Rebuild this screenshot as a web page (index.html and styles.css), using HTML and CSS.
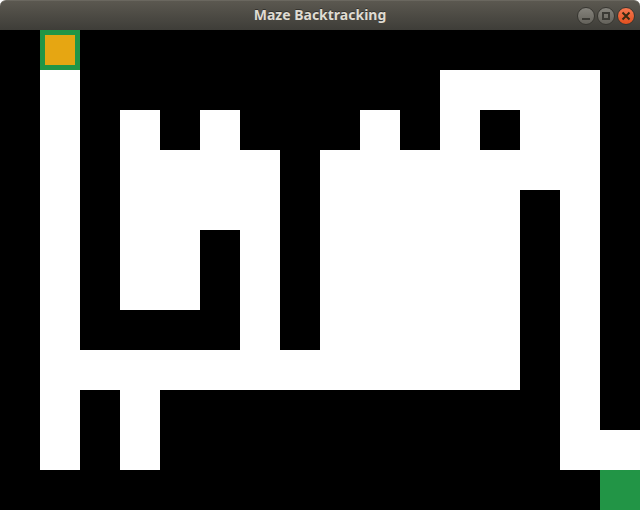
FILE: index.html
```html
<!DOCTYPE html>
<html lang="en">
<head>
<meta charset="utf-8">
<title>Maze Backtracking</title>
<link rel="stylesheet" href="styles.css">
</head>
<body>
<div class="window">
  <header class="titlebar">
    <h1 class="title">Maze Backtracking</h1>
    <div class="controls">
      <button class="control" type="button" aria-label="Minimize">
        <svg viewBox="0 0 18 18"><path d="M5 12h8" /></svg>
      </button>
      <button class="control" type="button" aria-label="Maximize">
        <svg viewBox="0 0 18 18"><path d="M6 6h6v6H6z" /></svg>
      </button>
      <button class="control close" type="button" aria-label="Close">
        <svg viewBox="0 0 18 18"><path d="M5.500 5.500l7 7M12.500 5.500l-7 7" /></svg>
      </button>
    </div>
  </header>
  <main class="maze" id="maze"></main>
</div>
<script src="maze.js"></script>
</body>
</html>
```
FILE: styles.css
```css
* {
  box-sizing: border-box;
}

body {
  margin: 0;
  background: #fff;
}

.titlebar {
  display: grid;
  grid-template-columns: 1fr auto 1fr;
  align-items: center;
  height: 30px;
  padding: 0 5px;
  border-top: 1px solid #6a675f;
  border-radius: 6px 6px 0 0;
  background: linear-gradient(#5b5850, #3e3d38);
}

.title {
  grid-column: 2;
  margin: 0;
  padding-bottom: 2px;
  color: #dfdbd2;
  font: 700 14px/20px "Noto Sans", "Open Sans", sans-serif;
  text-shadow: 0 -1px #33322e;
}

.controls {
  display: flex;
  justify-content: flex-end;
  gap: 2px;
}

.control {
  width: 18px;
  height: 18px;
  padding: 0;
  border: 1px solid #373631;
  border-radius: 50%;
  background: linear-gradient(#85837c, #64625b);
  color: #3b3a35;
}

.control svg {
  display: block;
  width: 18px;
  height: 18px;
  margin: -1px;
  fill: none;
  stroke: currentColor;
  stroke-width: 2;
}

.close {
  background: linear-gradient(#f6774f, #e3501f);
  color: #3a2a12;
}

.maze {
  display: grid;
  grid-template-columns: repeat(16, 1fr);
  background: #000;
}

.cell {
  aspect-ratio: 1;
}

.path {
  background: #fff;
}

.goal {
  background: #229546;
}

.player {
  border: 5px solid #229546;
  background: #e6a612;
}
```
FILE: maze.js
```js
const rows = [
  "#P##############",
  "#.#########....#",
  "#.#.#.###.#.#..#",
  "#.#....#.......#",
  "#.#....#.....#.#",
  "#.#..#.#.....#.#",
  "#.#..#.#.....#.#",
  "#.####.#.....#.#",
  "#............#.#",
  "#.#.##########.#",
  "#.#.##########..",
  "###############G"
];

const kinds = { "#": "wall", ".": "path", P: "player", G: "goal" };
const maze = document.getElementById("maze");

for (const row of rows) {
  for (const mark of row) {
    const cell = document.createElement("div");
    cell.className = "cell " + kinds[mark];
    maze.append(cell);
  }
}
```
